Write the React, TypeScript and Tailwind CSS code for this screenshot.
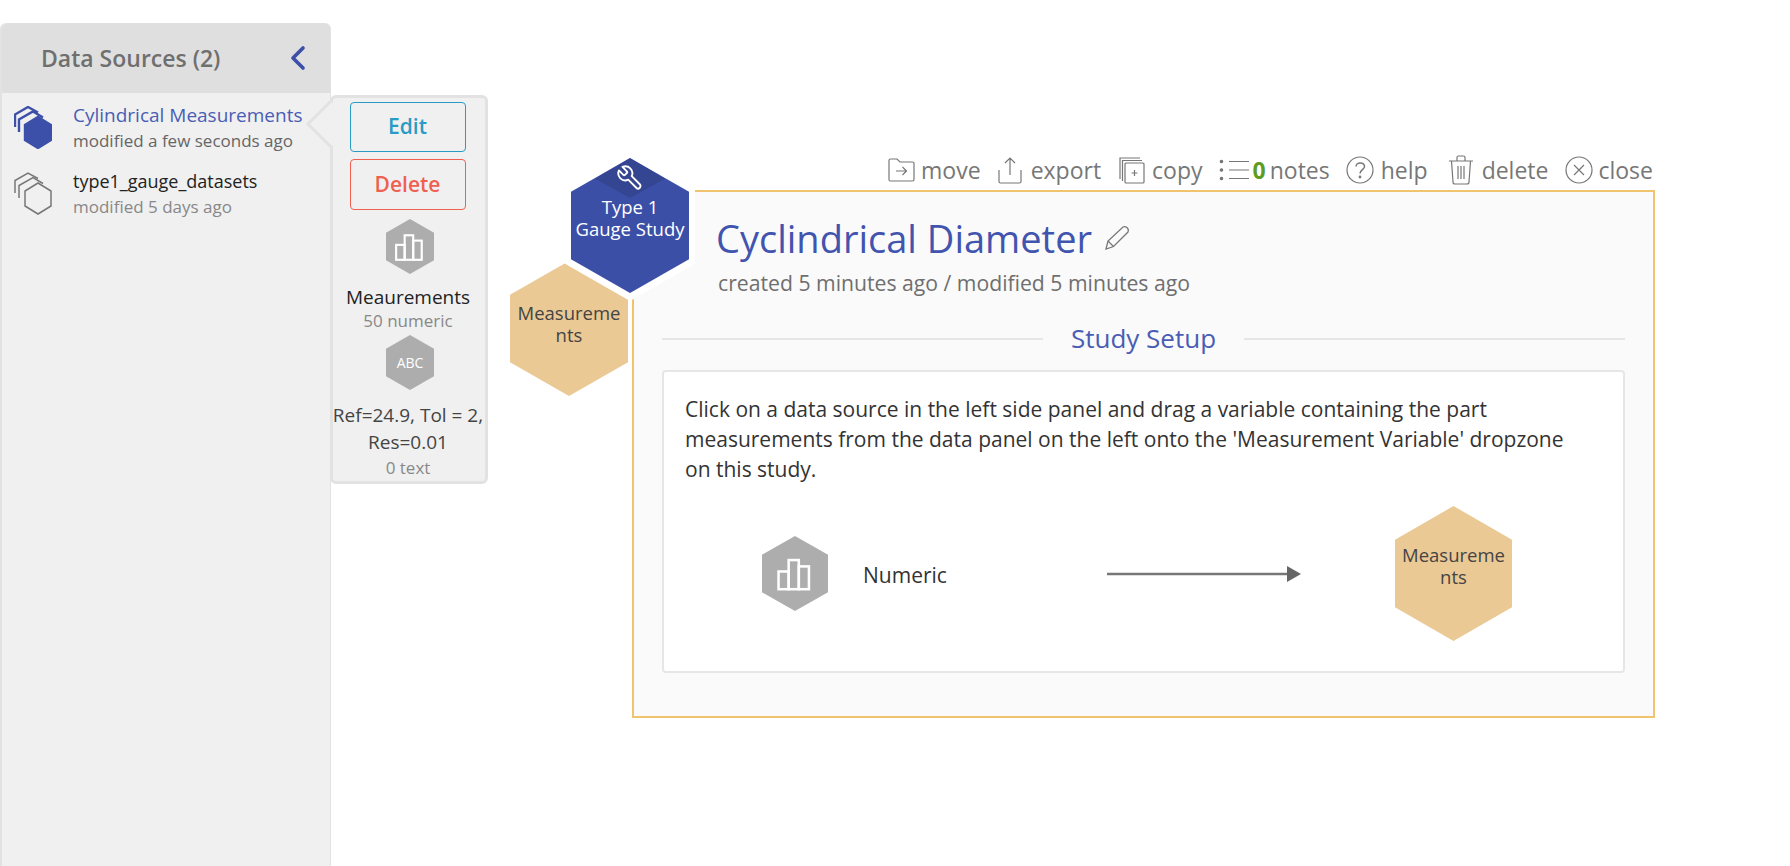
import { ChevronLeft } from "lucide-react";

const hex = "[clip-path:polygon(50%_0,100%_25%,100%_75%,50%_100%,0_75%,0_25%)]";

function Stack({ filled }: { filled?: boolean }) {
  const color = filled ? "#3d50a9" : "#777777";
  return (
    <svg width="38" height="43" viewBox="0 0 38 43" fill="none" stroke={color} strokeWidth={filled ? 2.4 : 1.5}>
      <path d="M5 26V13.5L19 5.5L29 11.5" />
      <path d="M1 21V8.5L14 1L24 6.5" />
      <path d="M24 11L37 19V34L24 42L11 34V19Z" fill={filled ? color : "#f0f0f0"} />
    </svg>
  );
}

function Bars({ size = 30 }: { size?: number }) {
  return (
    <svg width={size} height={size} viewBox="0 0 30 30" fill="none" stroke="#ffffff" strokeWidth="2">
      <rect x="2" y="13" width="8" height="14" />
      <rect x="10" y="4" width="8" height="23" />
      <rect x="18" y="9" width="8" height="18" />
    </svg>
  );
}

function ToolIcon({ name }: { name: string }) {
  const common = { fill: "none", stroke: "#777777", strokeWidth: 1.2 };
  if (name === "move")
    return (
      <svg width="27" height="26" viewBox="0 0 27 26" {...common}>
        <path d="M1 3.5Q1 2 2.5 2H9L12 5H24.5Q26 5 26 6.5V22.5Q26 24 24.5 24H2.5Q1 24 1 22.5Z" />
        <path d="M8 14H18M14.5 10L18.5 14L14.5 18" />
      </svg>
    );
  if (name === "export")
    return (
      <svg width="26" height="28" viewBox="0 0 26 28" {...common}>
        <path d="M13 19V2M8 7L13 2L18 7" />
        <path d="M2 14V25.5Q2 27 3.5 27H22.5Q24 27 24 25.5V14" />
      </svg>
    );
  if (name === "copy")
    return (
      <svg width="26" height="27" viewBox="0 0 26 27" {...common}>
        <path d="M1 22V1H21" />
        <path d="M3.5 24V3.5H23" />
        <rect x="6" y="6" width="19" height="20" rx="1" />
        <path d="M12.5 16H18.5M15.5 13V19" />
      </svg>
    );
  if (name === "notes")
    return (
      <svg width="30" height="22" viewBox="0 0 30 22" {...common}>
        <path d="M10 2.5H30M10 11H30M10 19.5H30" />
        <circle cx="2.5" cy="2.5" r="1.2" fill="#777777" />
        <circle cx="2.5" cy="11" r="1.2" fill="#777777" />
        <circle cx="2.5" cy="19.5" r="1.2" fill="#777777" />
      </svg>
    );
  if (name === "help")
    return (
      <svg width="28" height="28" viewBox="0 0 28 28" {...common}>
        <circle cx="14" cy="14" r="13" />
        <path d="M10 10.5C10 5.5 18.5 6 18.5 10.5C18.5 13.5 14 13.8 14 17.5" strokeWidth={1.5} />
        <circle cx="14" cy="21" r="0.8" fill="#777777" />
      </svg>
    );
  if (name === "delete")
    return (
      <svg width="26" height="30" viewBox="0 0 26 30" {...common}>
        <path d="M1 6H25M9 6V2.5Q9 1 10.5 1H15.5Q17 1 17 2.5V6" />
        <path d="M3.5 6L5 27Q5 29 7 29H19Q21 29 21 27L22.5 6" />
        <path d="M10 11V24M16 11V24M13 11V24" />
      </svg>
    );
  return (
    <svg width="28" height="28" viewBox="0 0 28 28" {...common}>
      <circle cx="14" cy="14" r="13" />
      <path d="M9 9L19 19M19 9L9 19" />
    </svg>
  );
}

const tools = [
  { name: "move", gap: "gap-[6px]", next: "mr-[16px]" },
  { name: "export", gap: "gap-[8px]", next: "mr-[18px]" },
  { name: "copy", gap: "gap-[7px]", next: "mr-[16px]" },
];

function Toolbar() {
  return (
    <div className="flex h-[38px] items-center justify-end pb-[2px] pr-[2px] text-[23px] text-[#777777]">
      {tools.map((t) => (
        <div key={t.name} className={`flex items-center ${t.gap} ${t.next}`}>
          <ToolIcon name={t.name} />
          <span>{t.name}</span>
        </div>
      ))}
      <div className="mr-[16px] flex items-center gap-[4px]">
        <ToolIcon name="notes" />
        <span className="font-bold text-[#5d9c1e]">0</span>
        <span>notes</span>
      </div>
      <div className="mr-[20px] flex items-center gap-[7px]">
        <ToolIcon name="help" />
        <span>help</span>
      </div>
      <div className="mr-[17px] flex items-center gap-[8px]">
        <ToolIcon name="delete" />
        <span>delete</span>
      </div>
      <div className="flex items-center gap-[5px]">
        <ToolIcon name="close" />
        <span>close</span>
      </div>
    </div>
  );
}

function Sidebar() {
  return (
    <aside className="mt-[23px] h-[843px] w-[331px] shrink-0 rounded-t-md border-r border-l-2 border-[#e2e2e2] bg-[#f0f0f0]">
      <div className="flex h-[70px] items-center justify-between rounded-t-md bg-[#dfdfdf] pl-[39px] pr-[12px]">
        <h2 className="text-[23px] font-semibold text-[#6f6f6f]">Data Sources (2)</h2>
        <ChevronLeft className="h-10 w-10 text-[#3d50a9]" strokeWidth={2.2} />
      </div>
      <div className="flex h-[66px] items-center gap-[21px] pl-[12px] pt-[3px]">
        <Stack filled />
        <div>
          <div className="whitespace-nowrap text-[19px] leading-[25px] text-[#4a5db5]">Cylindrical Measurements</div>
          <div className="whitespace-nowrap text-[17px] leading-[25px] text-[#666666]">modified a few seconds ago</div>
        </div>
      </div>
      <div className="flex h-[66px] items-center gap-[21px] pl-[12px] pt-[3px]">
        <Stack />
        <div>
          <div className="text-[18px] leading-[25px] text-[#222222]">type1_gauge_datasets</div>
          <div className="text-[17px] leading-[25px] text-[#888888]">modified 5 days ago</div>
        </div>
      </div>
    </aside>
  );
}

function Popover() {
  return (
    <div className="absolute left-[330px] top-[95px] flex h-[389px] w-[158px] flex-col items-center rounded-md border-[3px] border-[#e2e2e2] bg-[#f0f0f0] pt-[4px]">
      <div className="absolute left-[-20px] top-[9px] h-[34px] w-[34px] rotate-45 border-b-[3px] border-l-[3px] border-[#e2e2e2] bg-[#f0f0f0]" />
      <button className="relative mr-[3px] h-[50px] w-[116px] rounded border border-[#2a9bc4] text-[21px] font-semibold text-[#2a9bc4]">Edit</button>
      <button className="relative mr-[3px] mt-[7px] h-[51px] w-[116px] rounded border border-[#f0604f] text-[21px] font-semibold text-[#f0604f]">Delete</button>
      <div className={`ml-[2px] mt-[9px] flex h-[55px] w-[48px] items-center justify-center bg-[#adadae] ${hex}`}>
        <Bars size={32} />
      </div>
      <div className="mr-[2px] mt-[11px] whitespace-nowrap text-[19px] leading-[24px] text-[#222222]">Meaurements</div>
      <div className="mr-[2px] text-[17px] leading-[24px] text-[#888888]">50 numeric</div>
      <div className={`ml-[2px] mt-[2px] flex h-[55px] w-[48px] items-center justify-center bg-[#adadae] text-[14px] font-medium text-white ${hex}`}>ABC</div>
      <div className="mr-[2px] mt-[12px] w-full whitespace-nowrap text-center text-[19px] leading-[27px] text-[#444444]">
        Ref=24.9, Tol = 2,
        <br />
        Res=0.01
      </div>
      <div className="mr-[2px] text-[17px] leading-[23px] text-[#888888]">0 text</div>
    </div>
  );
}

function StudyBadges() {
  return (
    <>
      <div className={`absolute left-[-124px] top-[69px] flex h-[135px] w-[118px] items-start justify-center bg-[#ebc995] pt-[41px] text-center text-[18.5px] leading-[22px] text-[#444444] ${hex}`}>
        Measureme
        <br />
        nts
      </div>
      <div className={`absolute left-[-69px] top-[-40px] h-[149px] w-[130px] bg-white ${hex}`} />
      <div className={`absolute left-[-63px] top-[-34px] flex h-[135px] w-[118px] flex-col items-center bg-[#3c4fa7] text-white ${hex}`}>
        <div className="absolute left-[24px] top-0 flex h-[40px] w-[70px] items-center justify-center bg-[#344591] [clip-path:polygon(50%_0,100%_52%,50%_100%,0_52%)]">
          <svg width="28" height="28" viewBox="0 0 24 24" fill="none" stroke="#ffffff" strokeWidth="1.6" strokeLinecap="round" strokeLinejoin="round">
            <path d="M14.7 6.3a1 1 0 0 0 0 1.4l1.6 1.6a1 1 0 0 0 1.4 0l3.77-3.77a6 6 0 0 1-7.94 7.94l-6.91 6.91a2.12 2.12 0 0 1-3-3l6.91-6.91a6 6 0 0 1 7.94-7.94l-3.76 3.76z" transform="matrix(-1 0 0 1 24 0)" />
          </svg>
        </div>
        <div className="mt-[38px] whitespace-nowrap text-center text-[18.5px] leading-[22px]">
          Type 1
          <br />
          Gauge Study
        </div>
      </div>
    </>
  );
}

function StudySetup() {
  return (
    <div className="relative h-[528px] border-2 border-[#f0c36d] bg-[#fafafa] px-[28px] pt-[23px]">
      <StudyBadges />
      <div className="pl-[54px]">
        <h1 className="flex items-center gap-[12px] text-[38px] leading-[46px] text-[#4154ae]">
          Cyclindrical Diameter
          <svg width="26" height="26" viewBox="0 0 26 26" fill="none" stroke="#777777" strokeWidth="1.3">
            <path d="M2 24L4 16L19 2Q21 1 23.5 3Q25 5 24 7L9.5 21.5Z" />
            <path d="M4 16L9.5 21.5" />
          </svg>
        </h1>
        <p className="ml-[2px] mt-[8px] text-[21.2px] leading-[28px] text-[#6f6f6f]">created 5 minutes ago / modified 5 minutes ago</p>
      </div>
      <div className="mt-[25px] flex items-center gap-[28px]">
        <div className="mt-[1px] h-[2px] flex-1 bg-[#e6e6e6]" />
        <h2 className="text-[26px] leading-[32px] text-[#4a5db5]">Study Setup</h2>
        <div className="mt-[1px] h-[2px] flex-1 bg-[#e6e6e6]" />
      </div>
      <div className="mt-[16px] h-[303px] rounded border-2 border-[#e6e6e6] bg-white px-[21px] pt-[22px]">
        <p className="max-w-[900px] text-[21px] leading-[30px] text-[#333333]">
          Click on a data source in the left side panel and drag a variable containing the part measurements from the data panel on the left onto the 'Measurement Variable' dropzone on this study.
        </p>
        <div className="mt-[22px] flex items-center pl-[77px]">
          <div className={`flex h-[75px] w-[66px] shrink-0 items-center justify-center bg-[#adadae] ${hex}`}>
            <Bars size={38} />
          </div>
          <span className="ml-[35px] w-[244px] pt-[5px] text-[21px] text-[#333333]">Numeric</span>
          <svg width="194" height="20" viewBox="0 0 194 20">
            <path d="M0 10H182" stroke="#777777" strokeWidth="2.5" />
            <path d="M180 2L194 10L180 18Z" fill="#666666" />
          </svg>
          <div className={`ml-[94px] flex h-[135px] w-[117px] shrink-0 items-start justify-center bg-[#ebc995] pt-[38px] text-center text-[18.5px] leading-[22px] text-[#444444] ${hex}`}>
            Measureme
            <br />
            nts
          </div>
        </div>
      </div>
    </div>
  );
}

export default function App() {
  return (
    <main className="relative flex h-[866px] overflow-hidden bg-white font-['Open_Sans',sans-serif]">
      <Sidebar />
      <Popover />
      <section className="ml-[301px] w-[1023px] pt-[152px]">
        <Toolbar />
        <StudySetup />
      </section>
    </main>
  );
}
